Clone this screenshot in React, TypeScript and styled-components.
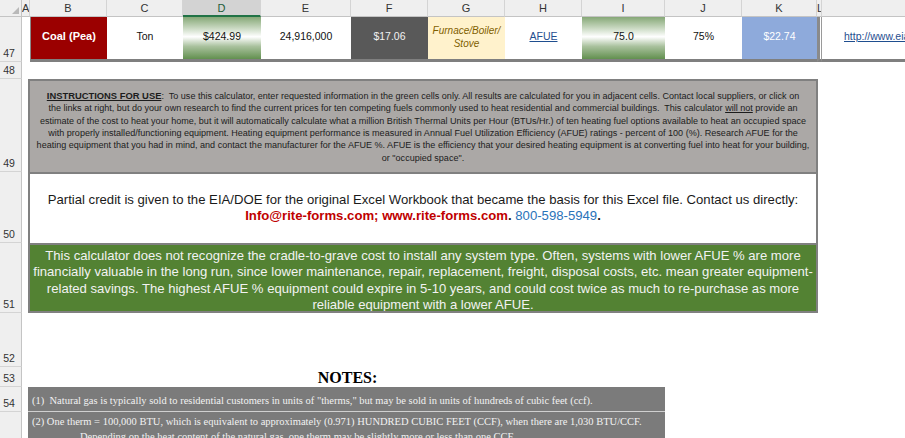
import React from 'react';
import styled, { createGlobalStyle } from 'styled-components';

const Global = createGlobalStyle`
  html, body { margin: 0; padding: 0; background: #ffffff; overflow: hidden; }
  body { width: 905px; height: 438px; font-family: "Liberation Sans", Arial, sans-serif; }
`;

const COLS = [22, 8, 77, 76, 78, 90, 77, 77, 77, 83, 77, 75, 5, 240];
const ROWS = [17, 45, 17, 93, 71, 70, 54, 20, 25, 40];
const LETTERS = ['A', 'B', 'C', 'D', 'E', 'F', 'G', 'H', 'I', 'J', 'K', 'L', 'M'];
const ROW_NUMS = [47, 48, 49, 50, 51, 52, 53, 54, 55];

const Sheet = styled.div`
  display: grid;
  grid-template-columns: ${COLS.map((c) => c + 'px').join(' ')};
  grid-template-rows: ${ROWS.map((r) => r + 'px').join(' ')};
  width: 905px;
  overflow: hidden;
`;

type Place = { $col: number; $row: number; $span?: number };

const Placed = styled.div<Place>`
  grid-column: ${(p) => p.$col} / span ${(p) => p.$span ?? 1};
  grid-row: ${(p) => p.$row};
  box-sizing: border-box;
  min-width: 0;
  overflow: hidden;
`;

const Corner = styled(Placed)`
  background: #efefef;
  border-right: 1px solid #c4c4c4;
  border-bottom: 1px solid #c4c4c4;
  position: relative;
  &::after {
    content: '';
    position: absolute;
    right: 2px;
    bottom: 2px;
    border-left: 7px solid transparent;
    border-bottom: 7px solid #b9b9b9;
  }
`;

const ColHeader = styled(Placed)<{ $selected?: boolean }>`
  background: ${(p) => (p.$selected ? '#d3d3d3' : '#efefef')};
  border-right: 1px solid #d4d4d4;
  border-bottom: ${(p) => (p.$selected ? '2px solid #217346' : '1px solid #c4c4c4')};
  color: ${(p) => (p.$selected ? '#1d5c38' : '#333333')};
  font-size: 11px;
  display: flex;
  align-items: center;
  justify-content: center;
  line-height: 1;
  padding-top: ${(p) => (p.$selected ? '1px' : '0')};
`;

const NarrowHeader = styled(ColHeader)`
  justify-content: flex-start;
  padding-left: 0;
`;

const RowHeader = styled(Placed)`
  background: #efefef;
  border-right: 1px solid #c4c4c4;
  border-bottom: 1px solid #d4d4d4;
  color: #333333;
  font-size: 10.5px;
  display: flex;
  align-items: flex-end;
  justify-content: center;
  padding-bottom: 2px;
  padding-right: 3px;
`;

const DataCell = styled(Placed)<{ $bg?: string; $fg?: string }>`
  background: ${(p) => p.$bg ?? '#ffffff'};
  color: ${(p) => p.$fg ?? '#111111'};
  border-bottom: 3px solid #7f7f7f;
  font-size: 10.5px;
  display: flex;
  flex-direction: column;
  align-items: center;
  justify-content: center;
  text-align: center;
  line-height: 13px;
  padding-bottom: 3px;
`;

const GradientCell = styled(DataCell)`
  background: linear-gradient(to bottom, #86a877 0%, #c5d6bd 25%, #ffffff 47%, #a9c19d 70%, #62904f 100%);
`;

const LabelCell = styled(DataCell)`
  font-weight: bold;
  font-size: 11px;
  border-left: 1px solid #8a8a8a;
`;

const FuelTypeCell = styled(DataCell)`
  font-style: italic;
  font-size: 10px;
  line-height: 13px;
`;

const LinkText = styled.span`
  color: #1f4e8f;
  text-decoration: underline;
`;

const GapCell = styled(Placed)`
  border-left: 3px solid #8a8a8a;
  border-bottom: 3px solid #7f7f7f;
  border-right: 1px solid #9a9a9a;
`;

const UrlCell = styled(DataCell)`
  align-items: flex-start;
  padding-left: 22px;
  white-space: nowrap;
`;

const InstructionBox = styled(Placed)`
  background: #aba8a6;
  border: 2px solid #808080;
  border-bottom: none;
  margin-left: -2px;
  margin-right: -1px;
  color: #1c1c1c;
  font-size: 9.05px;
  line-height: 12.3px;
  display: flex;
  flex-direction: column;
  align-items: center;
  justify-content: center;
  text-align: center;
  padding-top: 1px;
`;

const Line = styled.div`
  white-space: nowrap;
`;

const Heading = styled.span`
  font-weight: bold;
  text-decoration: underline;
  font-size: 9.4px;
`;

const Underlined = styled.span`
  text-decoration: underline;
`;

const CreditBox = styled(Placed)`
  background: #ffffff;
  border: 2px solid #808080;
  border-bottom: none;
  margin-left: -2px;
  margin-right: -1px;
  color: #1a1a1a;
  font-size: 13.15px;
  line-height: 16px;
  display: flex;
  flex-direction: column;
  align-items: center;
  justify-content: center;
  text-align: center;
  padding-bottom: 2px;
`;

const Red = styled.span`
  color: #c00000;
  font-weight: bold;
`;

const Blue = styled.span`
  color: #2a73b9;
`;

const Strong = styled.span`
  font-weight: bold;
`;

const GreenBox = styled(Placed)`
  background: #538233;
  border: 2px solid #808080;
  margin-left: -2px;
  margin-right: -1px;
  color: #f2f2f2;
  font-size: 13.1px;
  line-height: 16.5px;
  display: flex;
  flex-direction: column;
  align-items: center;
  justify-content: center;
  text-align: center;
  padding-top: 5px;
`;

const NotesTitle = styled(Placed)`
  font-family: "Liberation Serif", "Times New Roman", serif;
  font-weight: bold;
  font-size: 16px;
  display: flex;
  align-items: center;
  justify-content: center;
  color: #000000;
  padding-top: 1px;
`;

const NoteRow = styled(Placed)<{ $divider?: boolean }>`
  background: #7b7b7b;
  margin-left: -2px;
  font-family: "Liberation Serif", "Times New Roman", serif;
  color: #f2f2f2;
  font-size: 10.5px;
  line-height: 15px;
  padding-left: 4px;
  display: flex;
  flex-direction: column;
  justify-content: ${(p) => (p.$divider ? 'center' : 'flex-start')};
  border-bottom: ${(p) => (p.$divider ? '1px solid #d0d0d0' : 'none')};
  white-space: nowrap;
  padding-top: ${(p) => (p.$divider ? '3px' : '2px')};
`;

const Indented = styled.div`
  padding-left: 48px;
`;

export default function App() {
  return (
    <>
      <Global />
      <Sheet>
        <Corner $col={1} $row={1} />
        {LETTERS.map((l, i) =>
          l === 'A' || l === 'L' ? (
            <NarrowHeader key={l} $col={i + 2} $row={1}>
              {l}
            </NarrowHeader>
          ) : (
            <ColHeader key={l} $col={i + 2} $row={1} $selected={l === 'D'}>
              {l}
            </ColHeader>
          )
        )}
        {ROW_NUMS.map((n, i) => (
          <RowHeader key={n} $col={1} $row={i + 2}>
            {n}
          </RowHeader>
        ))}

        <LabelCell $col={3} $row={2} $bg="#9b0000" $fg="#ffffff">
          Coal (Pea)
        </LabelCell>
        <DataCell $col={4} $row={2}>Ton</DataCell>
        <GradientCell $col={5} $row={2}>$424.99</GradientCell>
        <DataCell $col={6} $row={2}>24,916,000</DataCell>
        <DataCell $col={7} $row={2} $bg="#595959" $fg="#f2f2f2">
          $17.06
        </DataCell>
        <FuelTypeCell $col={8} $row={2} $bg="#fff2cc" $fg="#7f6000">
          <span>Furnace/Boiler/</span>
          <span>Stove</span>
        </FuelTypeCell>
        <DataCell $col={9} $row={2}>
          <LinkText>AFUE</LinkText>
        </DataCell>
        <GradientCell $col={10} $row={2}>75.0</GradientCell>
        <DataCell $col={11} $row={2}>75%</DataCell>
        <DataCell $col={12} $row={2} $bg="#8eaadb" $fg="#ffffff">
          $22.74
        </DataCell>
        <GapCell $col={13} $row={2} />
        <UrlCell $col={14} $row={2}>
          <LinkText>http://www.eia.gov/</LinkText>
        </UrlCell>

        <InstructionBox $col={3} $row={4} $span={10}>
          <Line>
            <Heading>INSTRUCTIONS FOR USE</Heading>:&nbsp; To use this calculator, enter requested information in the green cells only. All results are calculated for you in adjacent cells. Contact local suppliers, or click on
          </Line>
          <Line>
            the links at right, but do your own research to find the current prices for ten competing fuels commonly used to heat residential and commercial buildings.&nbsp; This calculator <Underlined>will not</Underlined> provide an
          </Line>
          <Line>
            estimate of the cost to heat your home, but it will automatically calculate what a million British Thermal Units per Hour (BTUs/Hr.) of ten heating fuel options available to heat an occupied space
          </Line>
          <Line>
            with properly installed/functioning equipment. Heating equipment performance is measured in Annual Fuel Utilization Efficiency (AFUE) ratings - percent of 100 (%). Research AFUE for the
          </Line>
          <Line>
            heating equipment that you had in mind, and contact the manufacturer for the AFUE %. AFUE is the efficiency that your desired heating equipment is at converting fuel into heat for your building,
          </Line>
          <Line>or "occupied space".</Line>
        </InstructionBox>

        <CreditBox $col={3} $row={5} $span={10}>
          <Line>
            Partial credit is given to the EIA/DOE for the original Excel Workbook that became the basis for this Excel file. Contact us directly:
          </Line>
          <Line>
            <Red>Info@rite-forms.com; www.rite-forms.com</Red>
            <Strong>. </Strong>
            <Blue>800-598-5949</Blue>
            <Strong>.</Strong>
          </Line>
        </CreditBox>

        <GreenBox $col={3} $row={6} $span={10}>
          <Line>
            This calculator does not recognize the cradle-to-grave cost to install any system type. Often, systems with lower AFUE % are more
          </Line>
          <Line>
            financially valuable in the long run, since lower maintenance, repair, replacement, freight, disposal costs, etc. mean greater equipment-
          </Line>
          <Line>
            related savings. The highest AFUE % equipment could expire in 5-10 years, and could cost twice as much to re-purchase as more
          </Line>
          <Line>reliable equipment with a lower AFUE.</Line>
        </GreenBox>

        <NotesTitle $col={3} $row={8} $span={8}>
          NOTES:
        </NotesTitle>
        <NoteRow $col={3} $row={9} $span={8} $divider>
          <div>
            (1)&nbsp; Natural gas is typically sold to residential customers in units of "therms," but may be sold in units of hundreds of cubic feet (ccf).
          </div>
        </NoteRow>
        <NoteRow $col={3} $row={10} $span={8}>
          <div>
            (2) One therm = 100,000 BTU, which is equivalent to approximately (0.971) HUNDRED CUBIC FEET (CCF), when there are 1,030 BTU/CCF.
          </div>
          <Indented>
            Depending on the heat content of the natural gas, one therm may be slightly more or less than one CCF.
          </Indented>
        </NoteRow>
      </Sheet>
    </>
  );
}
